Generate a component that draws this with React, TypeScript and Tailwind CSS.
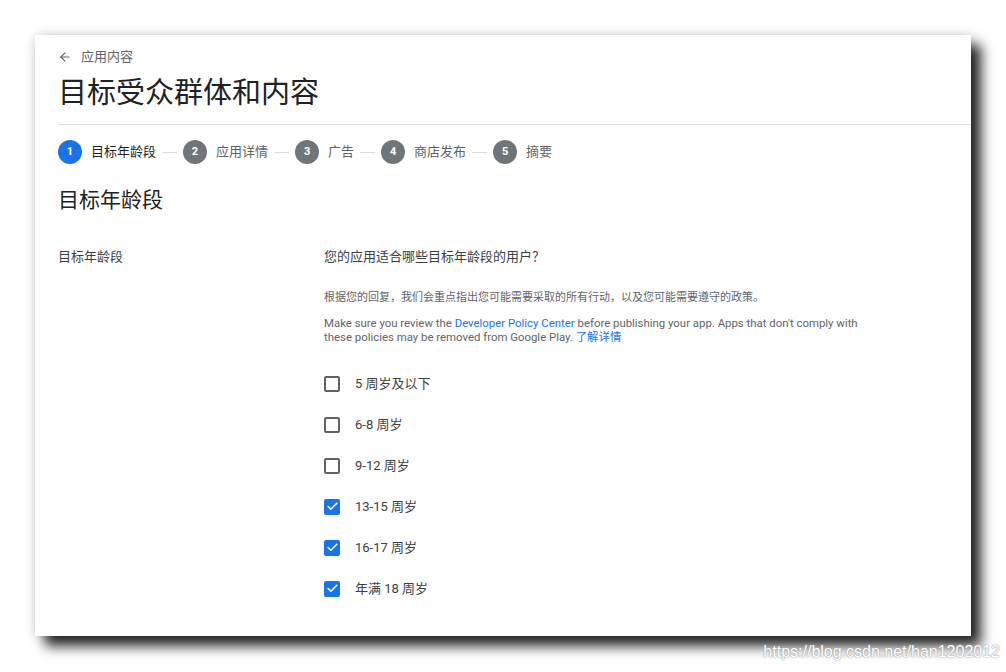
import { ArrowLeft, Check } from "lucide-react";

const steps = ["目标年龄段", "应用详情", "广告", "商店发布", "摘要"];

const ages = [
  { label: "5 周岁及以下", checked: false },
  { label: "6-8 周岁", checked: false },
  { label: "9-12 周岁", checked: false },
  { label: "13-15 周岁", checked: true },
  { label: "16-17 周岁", checked: true },
  { label: "年满 18 周岁", checked: true },
];

function Checkbox({ checked }: { checked: boolean }) {
  if (checked) {
    return (
      <div className="w-[16px] h-[16px] rounded-[2px] bg-[#1a73e8] flex items-center justify-center">
        <Check size={13} strokeWidth={3} color="#fff" />
      </div>
    );
  }
  return <div className="w-[16px] h-[16px] rounded-[2px] border-2 border-[#5f6368]" />;
}

export default function App() {
  return (
    <div
      className="relative w-[1006px] h-[672px] bg-white pt-[35px] pl-[35px] overflow-hidden"
      style={{ fontFamily: 'Roboto, "Noto Sans CJK SC", sans-serif' }}
    >
      <div className="w-[936px] h-[601px] bg-white pt-[12px] pl-[23px] shadow-[10px_10px_12px_rgba(0,0,0,0.85),0_0_10px_rgba(0,0,0,0.18)]">
        {/* Back link */}
        <div className="h-[20px] flex items-center gap-[9px] text-[13px] text-[#5f6368]">
          <ArrowLeft size={14} strokeWidth={2} />
          <span>应用内容</span>
        </div>

        <h1 className="mt-[8px] text-[29px] leading-[36px] text-[#202124]">目标受众群体和内容</h1>

        <div className="mt-[13px] h-px bg-[#dadce0]" />

        {/* Stepper */}
        <div className="mt-[15px] h-[24px] flex items-center">
          {steps.map((s, i) => (
            <div key={s} className="flex items-center">
              <div
                className={`w-[24px] h-[24px] rounded-full flex items-center justify-center text-[11px] font-bold text-white ${
                  i === 0 ? "bg-[#1a73e8]" : "bg-[#70757a]"
                }`}
              >
                {i + 1}
              </div>
              <span className={`ml-[9px] text-[13px] ${i === 0 ? "text-[#202124]" : "text-[#5f6368]"}`}>{s}</span>
              {i < steps.length - 1 && <div className="mx-[6px] w-[15px] h-px bg-[#dadce0]" />}
            </div>
          ))}
        </div>

        <h2 className="mt-[21px] text-[21px] leading-[30px] text-[#202124]">目标年龄段</h2>

        <div className="mt-[32px] flex">
          <div className="w-[266px] text-[13px] leading-[20px] text-[#3c4043]">目标年龄段</div>
          <div className="w-[545px]">
            <div className="text-[13px] leading-[20px] text-[#3c4043]">您的应用适合哪些目标年龄段的用户？</div>
            <p className="mt-[23px] text-[11px] leading-[16px] text-[#5f6368]">
              根据您的回复，我们会重点指出您可能需要采取的所有行动，以及您可能需要遵守的政策。
            </p>
            <p className="mt-[10px] text-[11.4px] leading-[14px] text-[#5f6368]">
              Make sure you review the <span className="text-[#1a73e8]">Developer Policy Center</span> before
              publishing your app. Apps that don't comply with these policies may be removed from Google Play.{" "}
              <span className="text-[#1a73e8]">了解详情</span>
            </p>
            <div className="mt-[19px] flex flex-col">
              {ages.map((a) => (
                <div key={a.label} className="h-[41px] flex items-center gap-[15px]">
                  <Checkbox checked={a.checked} />
                  <span className="text-[13px] text-[#3c4043]">{a.label}</span>
                </div>
              ))}
            </div>
          </div>
        </div>
      </div>

      <div
        className="absolute right-[6px] bottom-[8px] text-[16px] text-white"
        style={{ fontFamily: '"Liberation Sans", sans-serif', textShadow: "0 0 1px #888, 0 0 2px #aaa" }}
      >
        https://blog.csdn.net/han1202012
      </div>
    </div>
  );
}
